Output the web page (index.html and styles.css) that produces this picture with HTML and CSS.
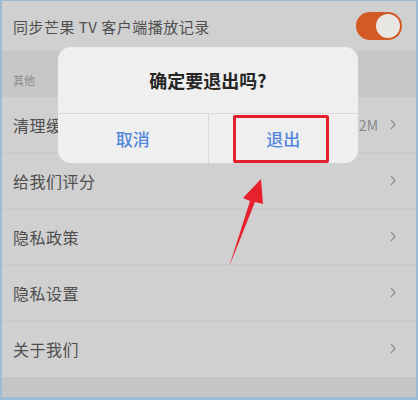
FILE: index.html
```html
<html lang="zh-CN">
<head>
    <meta charset="UTF-8">
    <meta name="viewport" content="width=device-width, initial-scale=1.0">
    <title>设置</title>
    <link rel="stylesheet" href="styles.css">
</head>
<body>
    <div class="screen">
        <div class="row row-sync">
            <span class="label">同步芒果 TV 客户端播放记录</span>
            <span class="toggle"><span class="knob"></span></span>
        </div>
        <div class="section">其他</div>
        <div class="row">
            <span class="label">清理缓存</span>
            <span class="value">2M</span>
            <svg class="chev" viewBox="0 0 6 11"><path d="M1 1 L5 5.5 L1 10" /></svg>
        </div>
        <div class="row">
            <span class="label">给我们评分</span>
            <svg class="chev" viewBox="0 0 6 11"><path d="M1 1 L5 5.5 L1 10" /></svg>
        </div>
        <div class="row">
            <span class="label">隐私政策</span>
            <svg class="chev" viewBox="0 0 6 11"><path d="M1 1 L5 5.5 L1 10" /></svg>
        </div>
        <div class="row">
            <span class="label">隐私设置</span>
            <svg class="chev" viewBox="0 0 6 11"><path d="M1 1 L5 5.5 L1 10" /></svg>
        </div>
        <div class="row last">
            <span class="label">关于我们</span>
            <svg class="chev" viewBox="0 0 6 11"><path d="M1 1 L5 5.5 L1 10" /></svg>
        </div>
        <div class="footer"></div>

        <div class="dialog">
            <div class="dialog-title">确定要退出吗?</div>
            <div class="dialog-actions">
                <div class="action">取消</div>
                <div class="action">退出</div>
            </div>
        </div>
        <div class="mark"></div>

        <!-- pointer arrow -->
        <svg class="arrow" width="418" height="400" viewBox="0 0 418 400">
            <path d="M229 267 L250 201 L243 198 L261 179 L263 204 L255 202 Z" fill="#e8212e" />
        </svg>
    </div>
</body>
</html>
```

FILE: styles.css
```css
html, body {
    height: 100%;
}
body {
    margin: 0;
    background: #fff;
}
.screen {
    position: relative;
    width: 414px;
    height: 396px;
    overflow: hidden;
    border: 2px solid #9dbcd3;
    border-top-width: 1px;
    border-bottom-width: 3px;
    background: #cfd0cf;
    font-family: "Noto Sans CJK SC", "Noto Sans", sans-serif;
    color: #4f4f4f;
}
.row {
    display: flex;
    align-items: center;
    height: 55px;
    padding: 0 20px 0 11px;
    border-bottom: 1px solid #c8c9c8;
}
.row-sync {
    height: 50px;
    border-bottom: none;
    padding-right: 14px;
}
.row.last {
    border-bottom: none;
}
.label {
    flex: 1;
    font-size: 16px;
    letter-spacing: 0.5px;
}
.row-sync .label {
    font-size: 15px;
}
.value {
    font-size: 14px;
    color: #888;
    margin-right: 12px;
}
.chev {
    width: 6px;
    height: 11px;
}
.chev path {
    fill: none;
    stroke: #8a8a8a;
    stroke-width: 1.2;
}
.toggle {
    display: flex;
    justify-content: flex-end;
    align-items: center;
    width: 46px;
    height: 28px;
    border-radius: 14px;
    background: #d35a25;
    padding: 0 2px;
    box-sizing: border-box;
}
.knob {
    width: 24px;
    height: 24px;
    border-radius: 50%;
    background: #e8e6e2;
}
.section {
    height: 46px;
    background: #c6c7c6;
    display: flex;
    align-items: flex-end;
    padding: 0 0 9px 11px;
    box-sizing: border-box;
    font-size: 11px;
    color: #8a8a8a;
}
.footer {
    height: 22px;
    background: #c4c5c4;
    margin-top: 1px;
}
.dialog {
    position: absolute;
    left: 56px;
    top: 46px;
    width: 300px;
    height: 116px;
    border-radius: 13px;
    background: #efefef;
    display: flex;
    flex-direction: column;
    overflow: hidden;
}
.dialog-title {
    height: 66px;
    display: flex;
    align-items: center;
    justify-content: center;
    font-size: 18px;
    font-weight: 700;
    color: #262626;
    border-bottom: 1px solid #d9d9d9;
}
.dialog-actions {
    flex: 1;
    display: flex;
}
.action {
    flex: 1;
    display: flex;
    align-items: center;
    justify-content: center;
    font-size: 17px;
    color: #5187dc;
    font-weight: 500;
}
.action + .action {
    border-left: 1px solid #d9d9d9;
}
.mark {
    position: absolute;
    left: 231px;
    top: 114px;
    width: 90px;
    height: 42px;
    border: 3px solid #e3202c;
    border-radius: 2px;
}
.arrow {
    position: absolute;
    left: -2px;
    top: -1px;
}
```
